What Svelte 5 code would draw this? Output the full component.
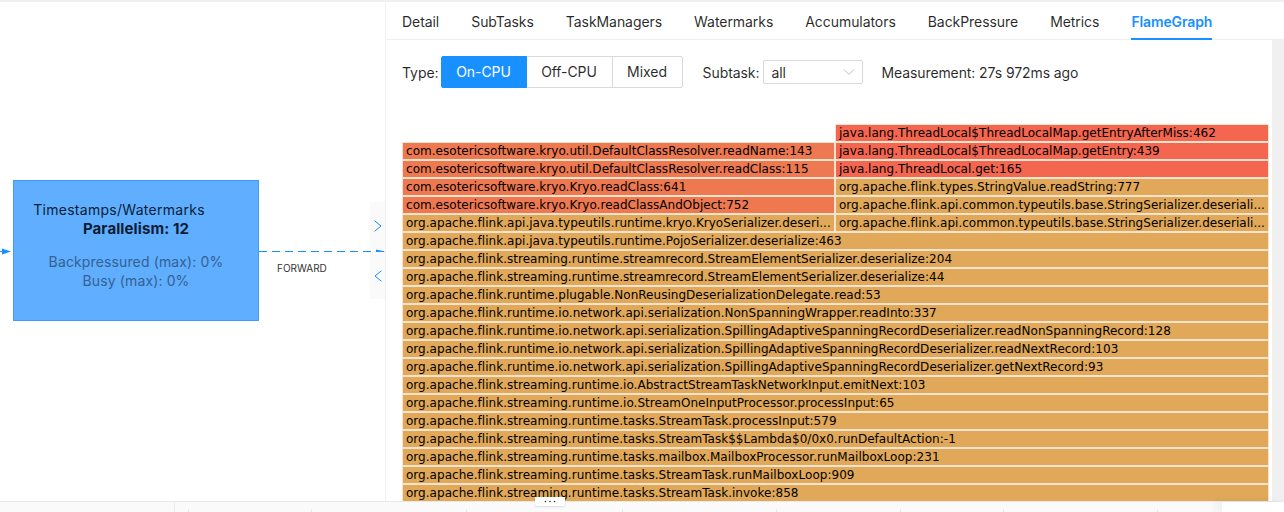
<script>
  const tabs = ['Detail', 'SubTasks', 'TaskManagers', 'Watermarks', 'Accumulators', 'BackPressure', 'Metrics', 'FlameGraph'];
  const types = ['On-CPU', 'Off-CPU', 'Mixed'];

  // top rows of the flame graph are split in two columns
  const splitRows = [
    [null, ['java.lang.ThreadLocal$ThreadLocalMap.getEntryAfterMiss:462', 'hot']],
    [['com.esotericsoftware.kryo.util.DefaultClassResolver.readName:143', 'warm'], ['java.lang.ThreadLocal$ThreadLocalMap.getEntry:439', 'hot']],
    [['com.esotericsoftware.kryo.util.DefaultClassResolver.readClass:115', 'warm'], ['java.lang.ThreadLocal.get:165', 'hot']],
    [['com.esotericsoftware.kryo.Kryo.readClass:641', 'warm'], ['org.apache.flink.types.StringValue.readString:777', 'mild']],
    [['com.esotericsoftware.kryo.Kryo.readClassAndObject:752', 'warm'], ['org.apache.flink.api.common.typeutils.base.StringSerializer.deseriali...', 'mild']],
    [['org.apache.flink.api.java.typeutils.runtime.kryo.KryoSerializer.deseri...', 'mild'], ['org.apache.flink.api.common.typeutils.base.StringSerializer.deseriali...', 'mild']]
  ];

  const fullRows = [
    'org.apache.flink.api.java.typeutils.runtime.PojoSerializer.deserialize:463',
    'org.apache.flink.streaming.runtime.streamrecord.StreamElementSerializer.deserialize:204',
    'org.apache.flink.streaming.runtime.streamrecord.StreamElementSerializer.deserialize:44',
    'org.apache.flink.runtime.plugable.NonReusingDeserializationDelegate.read:53',
    'org.apache.flink.runtime.io.network.api.serialization.NonSpanningWrapper.readInto:337',
    'org.apache.flink.runtime.io.network.api.serialization.SpillingAdaptiveSpanningRecordDeserializer.readNonSpanningRecord:128',
    'org.apache.flink.runtime.io.network.api.serialization.SpillingAdaptiveSpanningRecordDeserializer.readNextRecord:103',
    'org.apache.flink.runtime.io.network.api.serialization.SpillingAdaptiveSpanningRecordDeserializer.getNextRecord:93',
    'org.apache.flink.streaming.runtime.io.AbstractStreamTaskNetworkInput.emitNext:103',
    'org.apache.flink.streaming.runtime.io.StreamOneInputProcessor.processInput:65',
    'org.apache.flink.streaming.runtime.tasks.StreamTask.processInput:579',
    'org.apache.flink.streaming.runtime.tasks.StreamTask$$Lambda$0/0x0.runDefaultAction:-1',
    'org.apache.flink.streaming.runtime.tasks.mailbox.MailboxProcessor.runMailboxLoop:231',
    'org.apache.flink.streaming.runtime.tasks.StreamTask.runMailboxLoop:909',
    'org.apache.flink.streaming.runtime.tasks.StreamTask.invoke:858'
  ];

  const footCells = [175, 14, 123, 155, 156, 154, 124, 103, 154];
</script>

<div class="page">
  <div class="main">
    <section class="graph">
      <div class="node">
        <div class="node-name">Timestamps/Watermarks</div>
        <div class="node-par">Parallelism: 12</div>
        <div class="node-stat">Backpressured (max): 0%</div>
        <div class="node-stat">Busy (max): 0%</div>
      </div>
      <svg class="edges" width="385" height="499" viewBox="0 0 385 499">
        <path d="M0 249.5H10" stroke="#1890ff" stroke-width="1" />
        <path d="M2 246.5L11 249.5L2 252.5Z" fill="#1890ff" />
        <path d="M259 249.5H385" stroke="#1890ff" stroke-width="1" stroke-dasharray="8 5" />
        <path d="M376 247.5L385 249.5L376 251.5Z" fill="#1890ff" />
      </svg>
      <div class="edge-label">FORWARD</div>
      <div class="handles">
        <button class="handle" aria-label="expand">
          <svg width="9" height="12" viewBox="0 0 9 12"><path d="M1.5 0.7L8 6L1.5 11.3" fill="none" stroke="#1890ff" stroke-width="1" /></svg>
        </button>
        <button class="handle" aria-label="collapse">
          <svg width="9" height="12" viewBox="0 0 9 12"><path d="M8.5 0.7L2 6L8.5 11.3" fill="none" stroke="#1890ff" stroke-width="1" /></svg>
        </button>
      </div>
    </section>

    <section class="detail">
      <nav class="tabs">
        {#each tabs as tab}
          <span class="tab" class:active={tab === 'FlameGraph'}>{tab}</span>
        {/each}
      </nav>
      <div class="content">
        <div class="body">
          <div class="toolbar">
            <span class="label">Type:</span>
            <div class="btn-group">
              {#each types as t, i}
                <span class="btn" class:on={i === 0}>{t}</span>
              {/each}
            </div>
            <span class="label subtask">Subtask:</span>
            <div class="select">
              <span>all</span>
              <svg width="12" height="12" viewBox="0 0 12 12"><path d="M1 3.5L6 8.5L11 3.5" fill="none" stroke="#bfbfbf" stroke-width="1" /></svg>
            </div>
            <span class="measure">Measurement: 27s 972ms ago</span>
          </div>
          <div class="flame">
            {#each splitRows as row}
              <div class="row split">
                {#each row as cell}
                  {#if cell}
                    <div class="bar {cell[1]}">{cell[0]}</div>
                  {:else}
                    <div></div>
                  {/if}
                {/each}
              </div>
            {/each}
            {#each fullRows as text}
              <div class="row">
                <div class="bar mild">{text}</div>
              </div>
            {/each}
          </div>
        </div>
        <div class="gutter"></div>
      </div>
    </section>
  </div>

  <footer class="foot">
    {#each footCells as w, i}
      <span class="cell" class:first={i === 0} style="width:{w}px"></span>
    {/each}
    <span class="foot-end"></span>
    <button class="more" aria-label="more">
      <svg width="12" height="3" viewBox="0 0 12 3">
        <circle cx="1.5" cy="1.5" r="0.8" fill="#333" />
        <circle cx="6" cy="1.5" r="0.8" fill="#333" />
        <circle cx="10.5" cy="1.5" r="0.8" fill="#333" />
      </svg>
    </button>
  </footer>
</div>

<style>
  :global(body) {
    margin: 0;
    background: #fff;
  }

  .page {
    position: relative;
    width: 1284px;
    height: 512px;
    overflow: hidden;
    border-top: 2px solid #f0f0f0;
    box-sizing: border-box;
    font-family: Inter, "Liberation Sans", sans-serif;
    color: rgba(0, 0, 0, 0.85);
    font-size: 14px;
  }

  .main {
    display: flex;
    height: 499px;
  }

  .graph {
    position: relative;
    width: 385px;
    flex: none;
    border-right: 1px solid #f0f0f0;
  }

  .node {
    position: absolute;
    left: 13px;
    top: 178px;
    width: 246px;
    height: 141px;
    box-sizing: border-box;
    background: #5faeff;
    border: 1px solid #3d9bff;
    text-align: center;
    line-height: 19px;
    padding-top: 19px;
  }

  .node-name {
    color: #0c1d33;
    font-size: 14px;
    letter-spacing: 0.28px;
    margin-left: -34px;
  }

  .node-par {
    color: #0c1d33;
    font-weight: 700;
    font-size: 15px;
    letter-spacing: 0.1px;
    margin-bottom: 14px;
  }

  .node-stat {
    color: #35618f;
    font-size: 14px;
    letter-spacing: 0.13px;
  }

  .edges {
    position: absolute;
    left: 0;
    top: 0;
  }

  .edge-label {
    position: absolute;
    left: 277px;
    top: 260px;
    font-size: 10px;
    line-height: 12px;
    color: #333;
  }

  .handles {
    position: absolute;
    right: 0;
    top: 200px;
    display: flex;
    flex-direction: column;
    gap: 3px;
  }

  .handle {
    width: 15px;
    height: 47px;
    padding: 0;
    border: 0;
    background: #fafafa;
    display: flex;
    align-items: center;
    justify-content: center;
  }

  .detail {
    flex: 1;
    min-width: 0;
    display: flex;
    flex-direction: column;
  }

  .tabs {
    display: flex;
    gap: 32px;
    height: 38px;
    flex: none;
    padding-left: 16px;
    box-sizing: border-box;
    border-bottom: 1px solid #f0f0f0;
    white-space: nowrap;
    letter-spacing: -0.06px;
  }

  .tab {
    line-height: 39px;
    height: 38px;
    box-sizing: border-box;
  }

  .tab.active {
    color: #1890ff;
    font-weight: 600;
    letter-spacing: -0.12px;
    border-bottom: 2px solid #1890ff;
  }

  .content {
    flex: 1;
    display: flex;
    min-height: 0;
  }

  .body {
    flex: 1;
    min-width: 0;
    padding: 16px 3px 0 16px;
    overflow: hidden;
  }

  .gutter {
    width: 12px;
    flex: none;
    background: #f0f0f0;
  }

  .toolbar {
    display: flex;
    align-items: center;
    height: 32px;
    white-space: nowrap;
    letter-spacing: -0.06px;
  }

  .label {
    margin-right: 2px;
  }

  .btn-group {
    display: flex;
  }

  .btn {
    height: 32px;
    box-sizing: border-box;
    line-height: 30px;
    border: 1px solid #d9d9d9;
    margin-left: -1px;
    text-align: center;
  }

  .btn:first-child {
    margin-left: 0;
    width: 86px;
    border-radius: 2px 0 0 2px;
  }

  .btn:nth-child(2) {
    width: 87px;
  }

  .btn:last-child {
    width: 71px;
    border-radius: 0 2px 2px 0;
  }

  .btn.on {
    background: #1890ff;
    border-color: #1890ff;
    color: #fff;
    position: relative;
  }

  .subtask {
    margin-left: 20px;
    margin-right: 4px;
  }

  .select {
    width: 100px;
    height: 24px;
    box-sizing: border-box;
    border: 1px solid #d9d9d9;
    border-radius: 2px;
    padding: 0 7px;
    display: flex;
    align-items: center;
    justify-content: space-between;
  }

  .measure {
    margin-left: 18px;
    letter-spacing: -0.1px;
  }

  .flame {
    margin-top: 36px;
    font-family: "DejaVu Sans", Verdana, sans-serif;
    font-size: 12px;
    letter-spacing: 0.03px;
    color: #000;
    width: 867px;
  }

  .row {
    display: block;
    height: 18px;
  }

  .row.split {
    display: grid;
    grid-template-columns: 433px 434px;
  }

  .bar {
    height: 18px;
    box-sizing: border-box;
    border: 1px solid #f3e4d0;
    padding-left: 3px;
    line-height: 17px;
    white-space: nowrap;
    overflow: hidden;
  }

  .bar.mild {
    background: #e0a858;
  }

  .bar.warm {
    background: #ee7850;
  }

  .bar.hot {
    background: #f56650;
  }

  .foot {
    position: relative;
    display: flex;
    height: 11px;
    box-sizing: border-box;
    border-top: 1px solid #e8e8e8;
    background: #fafafa;
  }

  .cell {
    flex: none;
    height: 10px;
    box-sizing: border-box;
    background: linear-gradient(#e8e8e8, #e8e8e8) no-repeat right bottom / 1px 3px;
  }

  .cell.first {
    background: linear-gradient(#ececec, #ececec) no-repeat right bottom / 1px 10px;
  }

  .foot-end {
    margin-left: auto;
    width: 62px;
    background: #fff;
    box-shadow: -6px 0 8px rgba(0, 0, 0, 0.06);
  }

  .more {
    position: absolute;
    left: 535px;
    top: -5px;
    width: 30px;
    height: 9px;
    padding: 0;
    border: 0;
    border-radius: 0 0 2px 2px;
    background: #fff;
    box-shadow: 0 1px 2px rgba(0, 0, 0, 0.12);
    display: flex;
    align-items: center;
    justify-content: center;
  }
</style>
